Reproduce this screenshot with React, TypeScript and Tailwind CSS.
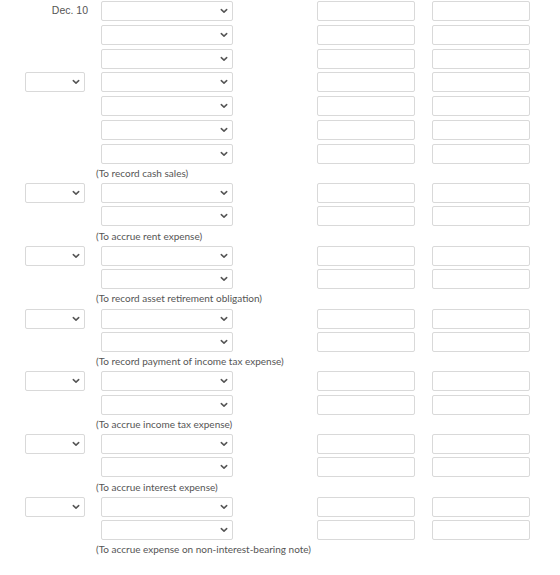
import React from "react";

type Group = {
  rows: number;
  dateRow?: number;
  note?: string;
  gap: string;
};

const groups: Group[] = [
  { rows: 7, dateRow: 3, note: "(To record cash sales)", gap: "gap-[3.75px]" },
  { rows: 2, dateRow: 0, note: "(To accrue rent expense)", gap: "gap-[3.25px]" },
  { rows: 2, dateRow: 0, note: "(To record asset retirement obligation)", gap: "gap-[3.25px]" },
  { rows: 2, dateRow: 0, note: "(To record payment of income tax expense)", gap: "gap-[3.25px]" },
  { rows: 2, dateRow: 0, note: "(To accrue income tax expense)", gap: "gap-[3.25px]" },
  { rows: 2, dateRow: 0, note: "(To accrue interest expense)", gap: "gap-[3.25px]" },
  { rows: 2, dateRow: 0, note: "(To accrue expense on non-interest-bearing note)", gap: "gap-[3.25px]" },
];

function Chevron() {
  return (
    <svg width="8" height="6" viewBox="0 0 8 6" className="absolute right-[4px] top-1/2 -translate-y-1/2">
      <path d="M1.3 1.6 L4 4.1 L6.7 1.6" fill="none" stroke="#555" strokeWidth="1.5" strokeLinecap="round" strokeLinejoin="round" />
    </svg>
  );
}

function SelectBox({ width }: { width: string }) {
  return (
    <div className={`relative h-[20px] ${width} bg-white border border-[#d9d9d9] rounded-[2px]`}>
      <Chevron />
    </div>
  );
}

function AmountBox() {
  return <div className="h-[20px] w-[98px] bg-white border border-[#d9d9d9] rounded-[2px]" />;
}

function EntryRow({ first, showDate }: { first: boolean; showDate: boolean }) {
  return (
    <div className="flex items-center h-[20px]">
      <div className="w-[63px] flex items-center">
        {first ? (
          <span
            className="w-full text-right text-[10.5px] text-[#555]"
            style={{ fontFamily: "'Liberation Sans', sans-serif" }}
          >
            Dec. 10
          </span>
        ) : showDate ? (
          <SelectBox width="w-[60px]" />
        ) : null}
      </div>
      <div className="ml-[13px]">
        <SelectBox width="w-[132px]" />
      </div>
      <div className="ml-[84px]">
        <AmountBox />
      </div>
      <div className="ml-[17px]">
        <AmountBox />
      </div>
    </div>
  );
}

export default function App() {
  return (
    <div className="w-[560px] h-[575px] bg-white pl-[25px] pt-[1px] overflow-hidden">
      {groups.map((g, gi) => (
        <div key={gi}>
          <div className={`flex flex-col ${g.gap}`}>
            {Array.from({ length: g.rows }).map((_, ri) => (
              <EntryRow key={ri} first={gi === 0 && ri === 0} showDate={g.dateRow === ri} />
            ))}
          </div>
          {g.note && (
            <div
              className="h-[19.5px] flex items-center pl-[71px] text-[10px] text-[#555]"
              style={{ fontFamily: "Lato, sans-serif" }}
            >
              {g.note}
            </div>
          )}
        </div>
      ))}
    </div>
  );
}
